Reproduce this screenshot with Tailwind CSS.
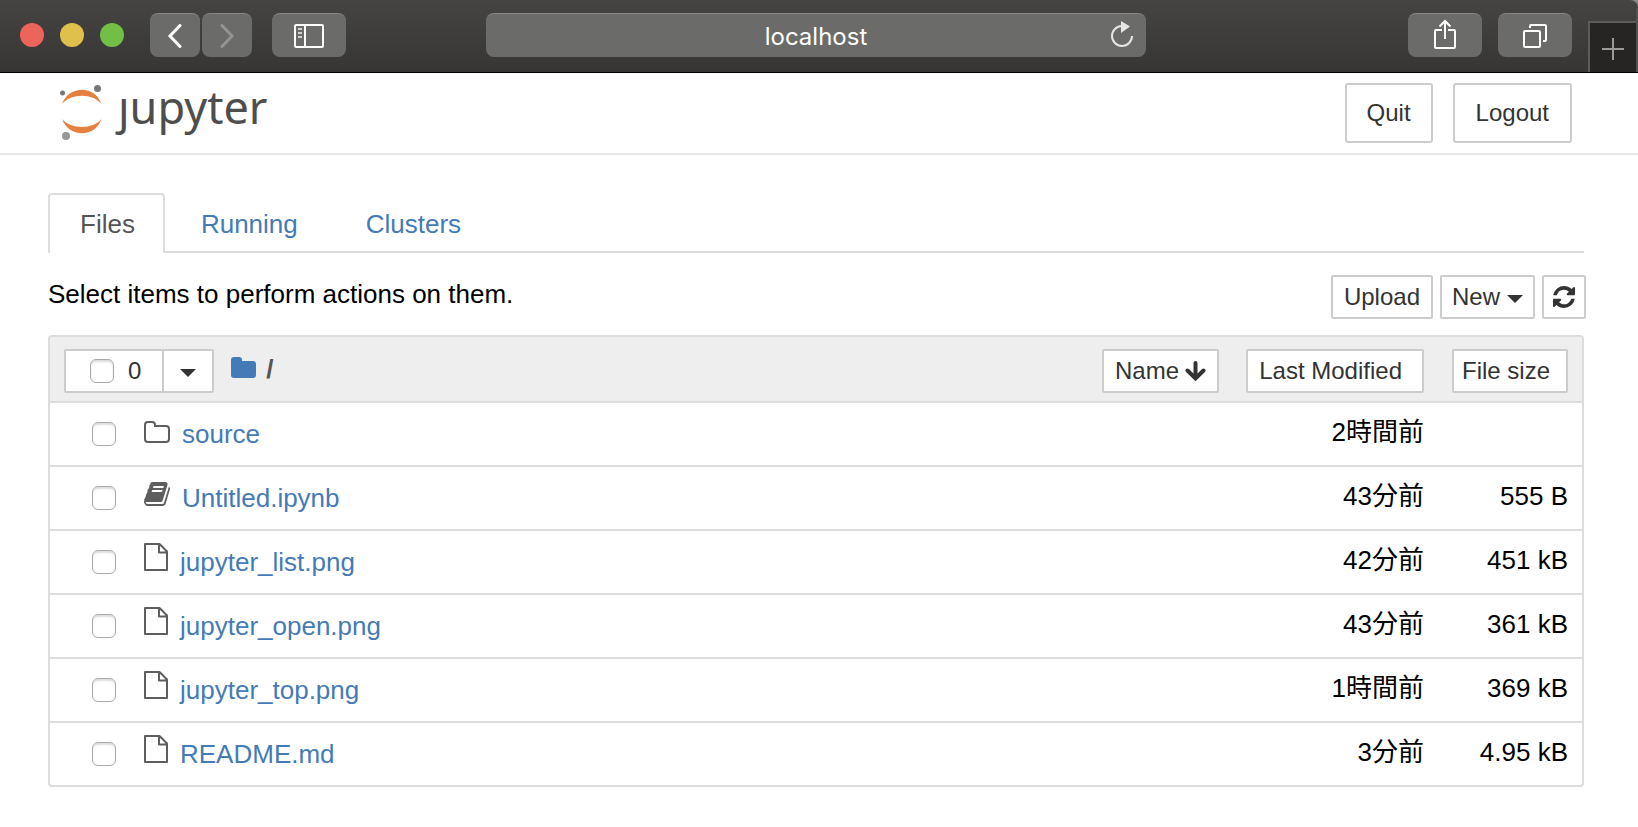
<!DOCTYPE html>
<html lang="ja">
<head>
<meta charset="utf-8">
<title>Home</title>
<script src="https://cdn.jsdelivr.net/npm/@tailwindcss/browser@4"></script>
</head>
<body class="min-h-screen bg-white font-['Liberation_Sans','Noto_Sans_CJK_JP',sans-serif] text-[26px] leading-9 text-black">

<svg class="hidden" aria-hidden="true">
  <symbol id="file" viewBox="0 0 24 28"><path d="M1 1h14.500l7.500 7.500V27H1zM15 1v8.500h8" fill="none" stroke="#5e5e5e" stroke-width="2" stroke-linejoin="round"/></symbol>
  <symbol id="caret" viewBox="0 0 16 8"><path d="M0 0h16l-8 8z" fill="currentColor"/></symbol>
</svg>

<div class="bg-[#8a8a8a]">
<div class="flex h-[73px] items-start rounded-tr-lg border-b border-black bg-linear-to-b from-[#454442] to-[#373634]">
  <div class="flex gap-4 pt-[23px] pl-5">
    <button aria-label="Close" class="size-6 rounded-full bg-[#ed655a]"></button>
    <button aria-label="Minimize" class="size-6 rounded-full bg-[#e0c04c]"></button>
    <button aria-label="Zoom" class="size-6 rounded-full bg-[#72be47]"></button>
  </div>
  <div class="flex gap-0.5 pt-[13px] pl-[26px]">
    <button aria-label="Back" class="flex h-11 w-[50px] items-center justify-center rounded-lg border-t border-[#868684] bg-[#6b6b69]">
      <svg class="h-6 w-4" viewBox="0 0 16 24" fill="none" stroke="#fff" stroke-width="3" stroke-linecap="round"><path d="M13 1.500L3 12l10 10.500"/></svg>
    </button>
    <button aria-label="Forward" class="flex h-11 w-[50px] items-center justify-center rounded-lg border-t border-[#868684] bg-[#6b6b69]">
      <svg class="h-6 w-4" viewBox="0 0 16 24" fill="none" stroke="#939391" stroke-width="3" stroke-linecap="round"><path d="M3 1.500L13 12 3 22.500"/></svg>
    </button>
  </div>
  <div class="pt-[13px] pl-5">
    <button aria-label="Sidebar" class="flex h-11 w-[74px] items-center justify-center rounded-lg border-t border-[#868684] bg-[#6b6b69]">
      <svg class="h-6 w-[30px]" viewBox="0 0 30 24" fill="none" stroke="#fff" stroke-width="2"><rect x="1" y="1" width="28" height="22" rx="1"/><path d="M11 1v22"/><path d="M4 5h4M4 9h4M4 13h4" stroke="#d0d0cf"/></svg>
    </button>
  </div>
  <div class="flex flex-1 justify-center pt-[13px] pr-[122px]">
    <div class="relative w-[660px]">
      <input aria-label="Address" value="localhost" class="h-11 w-full rounded-lg border-t border-[#868684] bg-[#6b6b69] pt-px text-center font-['Inter',sans-serif] text-2xl text-white">
      <button aria-label="Reload" class="absolute top-2 right-3">
        <svg class="h-7 w-6" viewBox="0 0 24 28"><path d="M12 5A10 10 0 1 0 22 15" fill="none" stroke="#e6e6e5" stroke-width="2"/><path d="M11 0l9 5.500-9 6.500z" fill="#e6e6e5"/></svg>
      </button>
    </div>
  </div>
  <div class="flex gap-4 pt-[13px]">
    <button aria-label="Share" class="flex h-11 w-[74px] justify-center rounded-lg border-t border-[#868684] bg-[#6b6b69] pt-[5px]">
      <svg class="h-[30px] w-[22px]" viewBox="0 0 22 30" fill="none" stroke="#fff" stroke-width="2"><path d="M8 11H2q-1 0-1 1v16q0 1 1 1h18q1 0 1-1V12q0-1-1-1h-6M11 20V2M5.500 7.500L11 2l5.500 5.500"/></svg>
    </button>
    <button aria-label="Tabs" class="flex h-11 w-[74px] items-center justify-center rounded-lg border-t border-[#868684] bg-[#6b6b69]">
      <svg class="h-6 w-6" viewBox="0 0 24 24" fill="none" stroke="#fff" stroke-width="2"><rect x="1" y="7" width="16" height="16" rx="1"/><path d="M7 4V2q0-1 1-1h14q1 0 1 1v14q0 1-1 1h-2"/></svg>
    </button>
  </div>
  <button aria-label="New tab" class="mt-[21px] ml-4 flex h-[51px] w-12 items-center justify-center border-t-2 border-l-2 border-[#5c5c5a] bg-[#262524] pt-0.5">
    <svg class="size-[22px]" viewBox="0 0 22 22" stroke="#9a9a99" stroke-width="2"><path d="M11 0v22M0 11h22"/></svg>
  </button>
  <div class="mt-2 h-16 w-0.5 bg-[#50504e]"></div>
</div>
</div>

<header class="flex items-start justify-between border-b-2 border-[#e7e7e7] pt-2.5 pr-[66px] pb-2.5 pl-[60px]">
  <a href="#" aria-label="jupyter" class="flex h-[60px] items-start text-[#4e4e4e]">
    <svg class="mt-0.5 h-14 w-[42px]" viewBox="0 0 42 56"><g fill="#e5803f"><path d="M2 19C9 0 35 0 41.500 19C33 8 11 8 2 19z"/><path d="M2 34C9 53 35 53 41.500 34C33 44.500 11 44.500 2 34z"/></g><circle cx="2.500" cy="8" r="2.500" fill="#767677"/><circle cx="37.500" cy="3.500" r="3.500" fill="#767677"/><circle cx="6" cy="51" r="4" fill="#989798"/></svg>
    <span class="pl-4 font-['Noto_Sans',sans-serif] text-[45px] leading-[48px]">ȷupyter</span>
  </a>
  <div class="flex gap-5 text-2xl text-[#333]">
    <button class="h-[60px] rounded-[3px] border-2 border-[#ccc] px-5">Quit</button>
    <button class="h-[60px] rounded-[3px] border-2 border-[#ccc] px-[21px]">Logout</button>
  </div>
</header>

<main class="px-[54px] pt-[38px] pl-12">
  <nav class="flex gap-1 border-b-2 border-[#ddd] text-[#447bb6]">
    <a href="#" class="-mb-0.5 h-[60px] rounded-t border-2 border-b-0 border-[#ddd] bg-white pr-7 pl-[30px] pt-[11px] text-[#555]">Files</a>
    <a href="#" class="px-8 pt-[13px]">Running</a>
    <a href="#" class="px-8 pt-[13px]">Clusters</a>
  </nav>

  <div class="-mr-0.5 flex items-start justify-between pt-[22px] pb-4">
    <p class="pt-px">Select items to perform actions on them.</p>
    <div class="flex gap-[7px] text-2xl text-[#333]">
      <button class="h-11 rounded-xs border-2 border-[#ccc] px-[11px]">Upload</button>
      <button class="flex h-11 items-center gap-[7px] rounded-xs border-2 border-[#ccc] px-2.5">New <svg class="mt-1 h-2 w-4"><use href="#caret"/></svg></button>
      <button aria-label="Refresh" class="flex h-11 items-center rounded-xs border-2 border-[#ccc] px-[9px]">
        <svg class="size-[22px]" viewBox="0 0 1536 1536" fill="currentColor"><path d="M1511 928q0 5-1 7-64 268-268 434.500T764 1536q-146 0-282.500-55T238 1324l-129 129q-19 19-45 19t-45-19-19-45V960q0-26 19-45t45-19h448q26 0 45 19t19 45-19 45l-137 137q71 66 161 102t187 36q134 0 250-65t186-179q11-17 53-117 8-23 30-23h192q13 0 22.500 9.500t9.500 22.500zm25-800v448q0 26-19 45t-45 19h-448q-26 0-45-19t-19-45 19-45l138-138Q969 256 768 256q-134 0-250 65T332 500q-11 17-53 117-8 23-30 23H50q-13 0-22.500-9.500T18 608v-7q65-268 270-434.500T768 0q146 0 284 55.500T1297 212l130-129q19-19 45-19t45 19 19 45z"/></svg>
      </button>
    </div>
  </div>

  <div class="overflow-hidden rounded border-2 border-[#ddd]">
    <table class="w-full border-collapse">
      <thead class="bg-[#eee] text-2xl text-[#333]">
        <tr>
          <th class="h-[65px] p-0 pt-3 align-top font-normal">
            <div class="flex h-11 items-center pl-3.5">
              <div class="flex h-11 rounded-xs border-2 border-[#ccc] bg-white">
                <label class="flex items-center gap-3.5 pr-[21px] pl-6"><input type="checkbox" class="size-6 appearance-none rounded-md border border-[#aaa] bg-white shadow-[inset_0_2px_2px_#ddd]">0</label>
                <button aria-label="Select menu" class="flex w-[50px] items-center justify-center border-l-2 border-[#ccc]"><svg class="mt-1 h-2 w-4"><use href="#caret"/></svg></button>
              </div>
              <a href="#" aria-label="Root folder" class="pb-2 pl-[17px]"><svg class="h-[21px] w-[25px]" viewBox="0 0 25 21"><path d="M3 0h5q3 0 3 3v1h11q3 0 3 3v11q0 3-3 3H3q-3 0-3-3V3q0-3 3-3z" fill="#447bb6"/></svg></a>
              <span class="pb-1 pl-2.5 text-[26px] font-bold text-[#555]">/</span>
              <button class="ml-auto flex h-11 items-center gap-1.5 rounded-xs border-2 border-[#ccc] bg-white px-[11px]">Name
                <svg class="h-[22px] w-[21px]" viewBox="0 0 21 22" fill="none" stroke="currentColor" stroke-width="4" stroke-linecap="round"><path d="M10.500 3v15M2.500 10.500l8 8 8-8"/></svg>
              </button>
            </div>
          </th>
          <th class="w-[205px] p-0 pt-3 text-right align-top font-normal"><button class="block ml-auto h-11 rounded-xs border-2 border-[#ccc] bg-white pr-5 pl-[11px]">Last Modified</button></th>
          <th class="w-[158px] p-0 pt-3 pr-3.5 text-right align-top font-normal"><button class="block ml-auto h-11 rounded-xs border-2 border-[#ccc] bg-white pr-4 pl-2">File size</button></th>
        </tr>
      </thead>
      <tbody class="text-right">
        <tr class="h-16 border-t-2 border-[#ddd]">
          <td class="p-0"><div class="flex items-center pl-[42px]"><input type="checkbox" aria-label="source" class="size-6 appearance-none rounded-md border border-[#aaa] shadow-[inset_0_2px_2px_#ddd]"><svg class="ml-7 mb-1 h-[22px] w-[26px]" viewBox="0 0 26 22"><path d="M1 4q0-3 3-3h4q3 0 3 3v1h11q3 0 3 3v10q0 3-3 3H4q-3 0-3-3z" fill="none" stroke="#5e5e5e" stroke-width="2"/></svg><a href="#" class="pl-3 text-[#447bb6]">source</a></div></td>
          <td class="p-0 pb-1">2時間前</td><td></td>
        </tr>
        <tr class="h-16 border-t-2 border-[#ddd]">
          <td class="p-0"><div class="flex items-center pl-[42px]"><input type="checkbox" aria-label="Untitled.ipynb" class="size-6 appearance-none rounded-md border border-[#aaa] shadow-[inset_0_2px_2px_#ddd]"><svg class="ml-7 mb-2 h-6 w-[26px]" viewBox="0 128 1664 1536" fill="#5e5e5e"><path d="M1639 478q40 57 18 129l-275 906q-19 64-76.500 107.500t-122.500 43.500h-923q-77 0-148.500-53.500t-99.500-131.500q-24-67-2-127 0-4 3-27t4-37q1-8-3-21.500t-3-19.500q2-11 8-21t16.500-23.500 16.500-23.500q23-38 45-91.500t30-91.500q3-10 .5-30t-.5-28q3-11 17-28t17-23q21-36 42-92t25-90q1-9-2.500-32t.5-28q4-13 22-30.500t22-22.500q19-26 42.500-84.500t27.500-96.500q1-8-3-25.500t-2-26.500q2-8 9-18t18-23 17-21q8-12 16.500-30.500t15-35 16-36 19.500-32 26.500-23.500 36-11.500 47.500 5.500l-1 3q38-9 51-9h761q74 0 114 56t18 130l-274 906q-36 119-71.500 153.500t-128.500 34.500h-869q-27 0-38 15-11 16-1 43 24 70 144 70h923q29 0 56-15.500t35-41.500l300-987q7-22 5-57 38 15 59 43zm-1064 2q-4 13 2 22.500t20 9.500h608q13 0 25.500-9.500t16.500-22.500l21-64q4-13-2-22.500t-20-9.500h-608q-13 0-25.500 9.500t-16.500 22.500zm-83 256q-4 13 2 22.500t20 9.500h608q13 0 25.500-9.500t16.500-22.500l21-64q4-13-2-22.500t-20-9.500h-608q-13 0-25.500 9.500t-16.500 22.500z"/></svg><a href="#" class="pl-3 text-[#447bb6]">Untitled.ipynb</a></div></td>
          <td class="p-0 pb-1">43分前</td><td class="p-0 pr-3.5 pb-1">555 B</td>
        </tr>
        <tr class="h-16 border-t-2 border-[#ddd]">
          <td class="p-0"><div class="flex items-center pl-[42px]"><input type="checkbox" aria-label="jupyter_list.png" class="size-6 appearance-none rounded-md border border-[#aaa] shadow-[inset_0_2px_2px_#ddd]"><svg class="ml-7 mb-2.5 h-7 w-6"><use href="#file"/></svg><a href="#" class="pl-3 text-[#447bb6]">jupyter_list.png</a></div></td>
          <td class="p-0 pb-1">42分前</td><td class="p-0 pr-3.5 pb-1">451 kB</td>
        </tr>
        <tr class="h-16 border-t-2 border-[#ddd]">
          <td class="p-0"><div class="flex items-center pl-[42px]"><input type="checkbox" aria-label="jupyter_open.png" class="size-6 appearance-none rounded-md border border-[#aaa] shadow-[inset_0_2px_2px_#ddd]"><svg class="ml-7 mb-2.5 h-7 w-6"><use href="#file"/></svg><a href="#" class="pl-3 text-[#447bb6]">jupyter_open.png</a></div></td>
          <td class="p-0 pb-1">43分前</td><td class="p-0 pr-3.5 pb-1">361 kB</td>
        </tr>
        <tr class="h-16 border-t-2 border-[#ddd]">
          <td class="p-0"><div class="flex items-center pl-[42px]"><input type="checkbox" aria-label="jupyter_top.png" class="size-6 appearance-none rounded-md border border-[#aaa] shadow-[inset_0_2px_2px_#ddd]"><svg class="ml-7 mb-2.5 h-7 w-6"><use href="#file"/></svg><a href="#" class="pl-3 text-[#447bb6]">jupyter_top.png</a></div></td>
          <td class="p-0 pb-1">1時間前</td><td class="p-0 pr-3.5 pb-1">369 kB</td>
        </tr>
        <tr class="h-[63px] border-t-2 border-[#ddd]">
          <td class="p-0"><div class="flex items-center pl-[42px]"><input type="checkbox" aria-label="README.md" class="size-6 appearance-none rounded-md border border-[#aaa] shadow-[inset_0_2px_2px_#ddd]"><svg class="ml-7 mb-2.5 h-7 w-6"><use href="#file"/></svg><a href="#" class="pl-3 text-[#447bb6]">README.md</a></div></td>
          <td class="p-0 pb-1">3分前</td><td class="p-0 pr-3.5 pb-1">4.95 kB</td>
        </tr>
      </tbody>
    </table>
  </div>
</main>
</body>
</html>
